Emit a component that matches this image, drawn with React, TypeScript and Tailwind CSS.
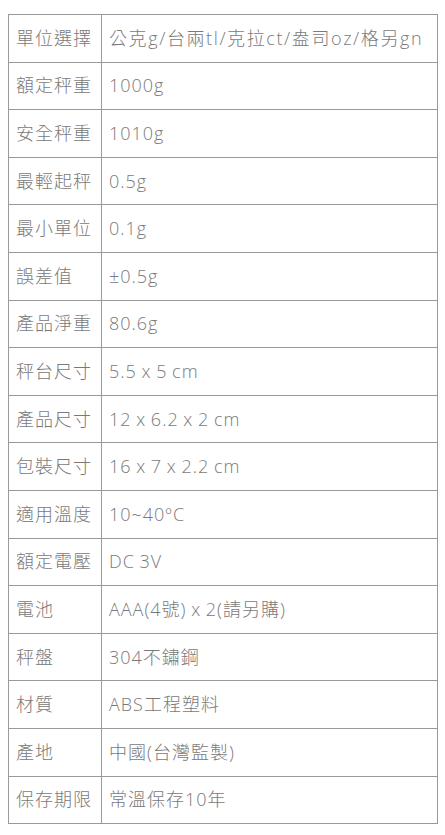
import React from "react";

const rows: [string, string][] = [
  ["單位選擇", "公克g/台兩tl/克拉ct/盎司oz/格另gn"],
  ["額定秤重", "1000g"],
  ["安全秤重", "1010g"],
  ["最輕起秤", "0.5g"],
  ["最小單位", "0.1g"],
  ["誤差值", "±0.5g"],
  ["產品淨重", "80.6g"],
  ["秤台尺寸", "5.5 x 5 cm"],
  ["產品尺寸", "12 x 6.2 x 2 cm"],
  ["包裝尺寸", "16 x 7 x 2.2 cm"],
  ["適用溫度", "10~40ºC"],
  ["額定電壓", "DC 3V"],
  ["電池", "AAA(4號) x 2(請另購)"],
  ["秤盤", "304不鏽鋼"],
  ["材質", "ABS工程塑料"],
  ["產地", "中國(台灣監製)"],
  ["保存期限", "常溫保存10年"],
];

export default function App() {
  return (
    <div className="w-[445px] h-[835px] bg-white pt-[14px] pl-[8px]">
      <div
        className="w-[430px] border-t border-l border-r border-[#9a9a9a] text-[#7a7a7a] font-light text-[18px] tracking-[1px] [word-spacing:-1px]"
        style={{ fontFamily: '"Open Sans", "Noto Sans CJK TC", sans-serif' }}
      >
        {rows.map(([k, v], i) => (
          <div key={k} className="flex h-[47.6px] border-b border-[#9a9a9a]">
            <div className="w-[93px] shrink-0 border-r border-[#9a9a9a] flex items-center pl-[7px] whitespace-nowrap">
              {k}
            </div>
            <div
              className={
                i === 0
                  ? "flex-1 flex items-center pl-[7px] whitespace-nowrap tracking-[1.6px]"
                  : "flex-1 flex items-center pl-[7px] whitespace-nowrap"
              }
            >
              {v}
            </div>
          </div>
        ))}
      </div>
    </div>
  );
}
